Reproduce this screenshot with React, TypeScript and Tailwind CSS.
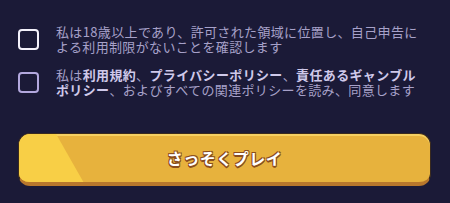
import { useState } from 'react';

function Box({ checked, light, onClick }: { checked: boolean; light?: boolean; onClick: () => void }) {
  return (
    <button
      onClick={onClick}
      className={`flex-shrink-0 w-[21px] h-[21px] rounded-[4px] border-2 ${
        light ? 'border-[#f4f2fb]' : 'border-[#b3a8de]'
      } ${checked ? 'bg-[#b3a8de]' : 'bg-transparent'}`}
    />
  );
}

export default function App() {
  const [age, setAge] = useState(false);
  const [terms, setTerms] = useState(false);

  return (
    <div
      className="w-[450px] h-[203px] bg-[#1b1a37] px-[18px] pt-[24px] text-[#a7a1c9]"
      style={{ fontFamily: '"Noto Sans CJK JP", "Noto Sans", sans-serif' }}
    >
      <div className="flex items-center gap-[17px]">
        <Box checked={age} light onClick={() => setAge(!age)} />
        <p className="w-[368px] text-[13px] leading-[15px] tracking-[0.35px]">
          私は18歳以上であり、許可された領域に位置し、自己申告による利用制限がないことを確認します
        </p>
      </div>

      <div className="flex items-center gap-[17px] mt-[13px]">
        <Box checked={terms} onClick={() => setTerms(!terms)} />
        <p className="w-[368px] text-[13px] leading-[15px] tracking-[0.35px]">
          私は<b className="font-bold text-[#cfc9ea]">利用規約</b>、<b className="font-bold text-[#cfc9ea]">プライバシーポリシー</b>、<b className="font-bold text-[#cfc9ea]">責任あるギャンブルポリシー</b>、およびすべての関連ポリシーを読み、同意します
        </p>
      </div>

      <button className="relative mt-[36px] w-[413px] h-[53px] rounded-[12px] bg-[#e7b23d] border border-[#3a2a1e] border-b-[4px] border-b-[#b8772c] overflow-hidden shadow-[inset_0_2px_0_#f6d062]">
        <span className="absolute inset-y-0 left-0 w-[70px] bg-[#f8cf46] [clip-path:polygon(0_0,53%_0,92%_100%,0_100%)]" />
        <span className="relative font-bold text-[16px] text-white tracking-[0.5px] [text-shadow:1px_1px_0_#8a4d1c,-1px_-1px_0_#8a4d1c,1px_-1px_0_#8a4d1c,-1px_1px_0_#8a4d1c,0_1.5px_0_#8a4d1c]">
          さっそくプレイ
        </span>
      </button>
    </div>
  );
}
